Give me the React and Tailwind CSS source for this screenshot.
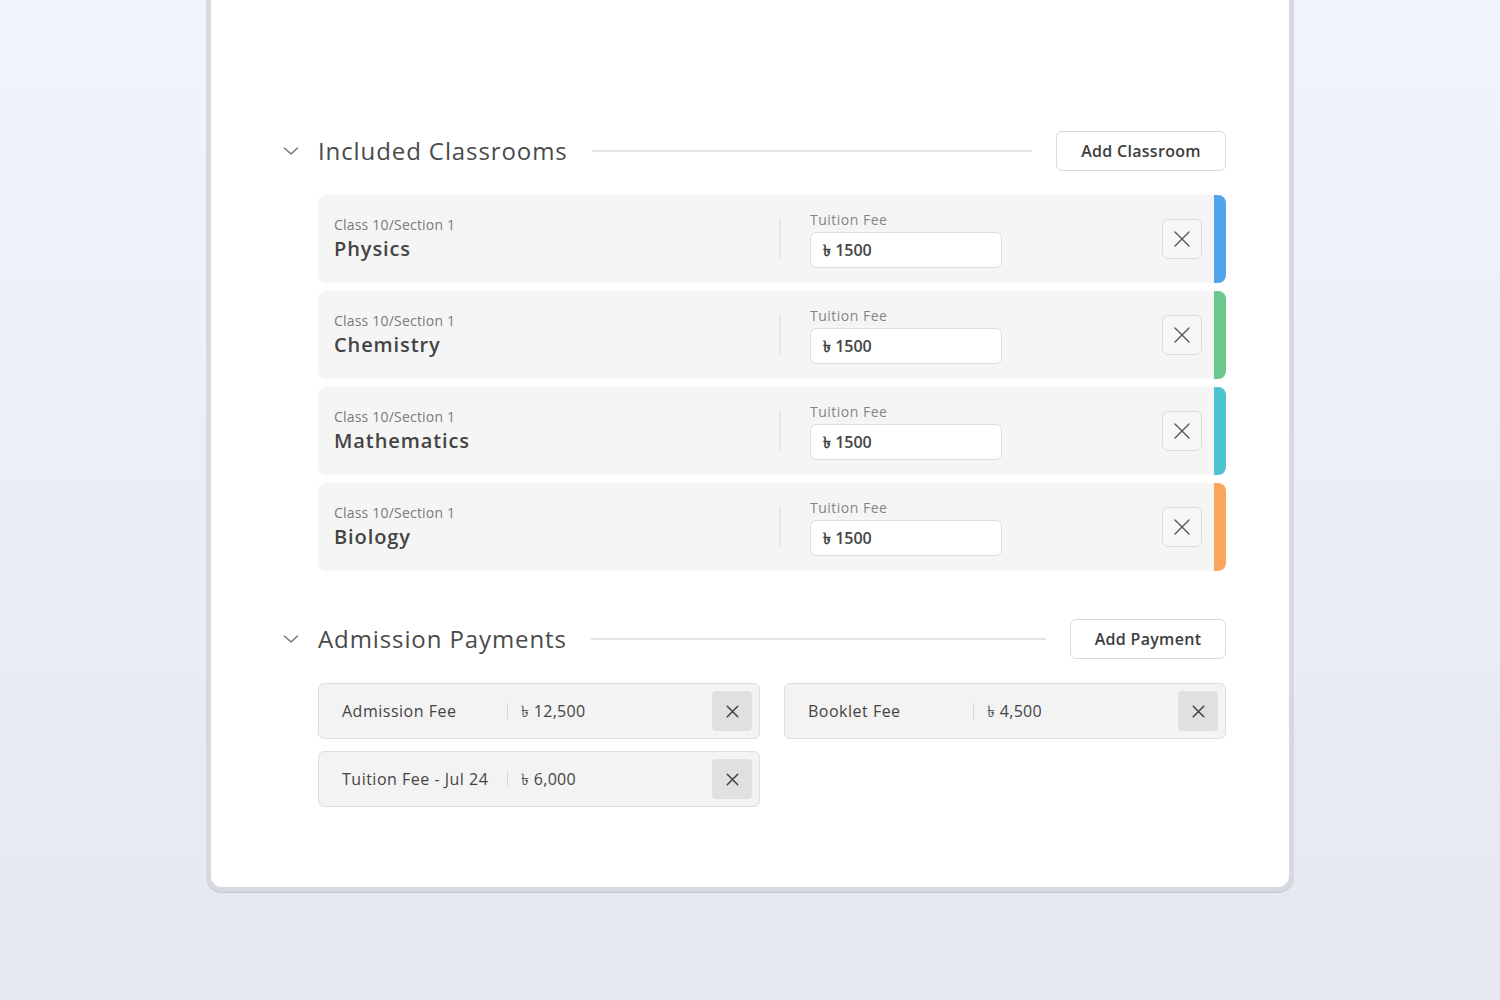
import React from 'react';

const classrooms = [
  { section: 'Class 10/Section 1', subject: 'Physics', fee: '1500', bar: 'bg-[#52a3ed]' },
  { section: 'Class 10/Section 1', subject: 'Chemistry', fee: '1500', bar: 'bg-[#6cc78c]' },
  { section: 'Class 10/Section 1', subject: 'Mathematics', fee: '1500', bar: 'bg-[#4ec3d0]' },
  { section: 'Class 10/Section 1', subject: 'Biology', fee: '1500', bar: 'bg-[#fba55d]' },
];

const payments = [
  { name: 'Admission Fee', amount: '12,500' },
  { name: 'Booklet Fee', amount: '4,500' },
  { name: 'Tuition Fee - Jul 24', amount: '6,000' },
];

const Chevron = () => (
  <svg width="18" height="18" viewBox="0 0 18 18" fill="none" className="shrink-0">
    <path d="M2.5 6l6.5 6 6.5-6" stroke="#7a7a7a" strokeWidth="1.6" strokeLinecap="round" strokeLinejoin="round" />
  </svg>
);

const Cross = ({ size = 20, width = 1.5, color = '#555' }) => (
  <svg width={size} height={size} viewBox="0 0 20 20" fill="none">
    <path d="M3 3l14 14M17 3L3 17" stroke={color} strokeWidth={width} strokeLinecap="round" />
  </svg>
);

const SectionHeader = ({ title, action, btnW }) => (
  <div className="flex items-center h-10">
    <Chevron />
    <h2 className="ml-[18px] text-[24px] text-[#4a4a4a] tracking-[0.9px]">{title}</h2>
    <div className="flex-1 h-[2px] bg-[#e4e4e4] mx-6" />
    <button className={`${btnW} h-10 border border-[#d9d9d9] rounded-md bg-white text-[16px] font-semibold tracking-[0.3px] text-[#3d3d3d]`}>
      {action}
    </button>
  </div>
);

export default function App() {
  return (
    <div
      className="min-h-screen w-full bg-gradient-to-b from-[#f0f4fd] to-[#e5e8ee] flex justify-center"
      style={{ fontFamily: '"Open Sans", "Noto Sans", "DejaVu Sans", sans-serif' }}
    >
      <div className="w-[1088px] h-[892px] bg-white border-[5px] border-t-0 border-[#d6d9df] rounded-b-[16px] shadow-[0_1px_0_#c4c7cc]">
        <div className="pt-[131px] pl-[71px] pr-[63px]">
          <SectionHeader title="Included Classrooms" action="Add Classroom" btnW="w-[170px]" />

          <div className="ml-[36px] mt-6 flex flex-col gap-2">
            {classrooms.map((c) => (
              <div key={c.subject} className="flex h-[88px] rounded-lg overflow-hidden bg-[#f5f5f5]">
                <div className="flex-1 flex items-center pl-4 pr-3">
                  <div className="w-[445px] flex flex-col">
                    <span className="text-[14px] text-[#7a7a7a] leading-[18px] tracking-[0.2px]">{c.section}</span>
                    <span className="text-[20px] font-semibold text-[#444] leading-[28px] mt-[1px] tracking-[0.9px]">{c.subject}</span>
                  </div>
                  <div className="w-[2px] h-10 bg-[#e6e6e6]" />
                  <div className="ml-[29px] flex flex-col">
                    <span className="text-[14px] text-[#858585] leading-[18px] tracking-[0.5px]">Tuition Fee</span>
                    <div className="mt-[3px] w-[192px] h-9 bg-white border border-[#dcdcdc] rounded-md flex items-center px-3 text-[16px] font-semibold text-[#444]">
                      ৳ {c.fee}
                    </div>
                  </div>
                  <div className="flex-1" />
                  <button className="w-10 h-10 border border-[#dcdcdc] rounded-md bg-[#f7f7f7] flex items-center justify-center">
                    <Cross size={20} width={1.4} color="#555" />
                  </button>
                </div>
                <div className={`w-3 ${c.bar}`} />
              </div>
            ))}
          </div>

          <div className="mt-12">
            <SectionHeader title="Admission Payments" action="Add Payment" btnW="w-[156px]" />
          </div>

          <div className="ml-[36px] mt-6 grid grid-cols-2 gap-x-6 gap-y-3">
            {payments.map((p) => (
              <div key={p.name} className="h-14 flex items-center bg-[#f3f3f3] border border-[#dedede] rounded-md pl-[23px] pr-[7px]">
                <span className="w-[165px] text-[16px] text-[#444] tracking-[0.5px]">{p.name}</span>
                <div className="w-px h-4 bg-[#d6d6d6]" />
                <span className="ml-[13px] text-[16px] text-[#444] flex-1 tracking-[0.3px]">৳ {p.amount}</span>
                <button className="w-10 h-10 rounded bg-[#e0e0e0] flex items-center justify-center">
                  <Cross size={15} width={2.1} color="#444" />
                </button>
              </div>
            ))}
          </div>
        </div>
      </div>
    </div>
  );
}
